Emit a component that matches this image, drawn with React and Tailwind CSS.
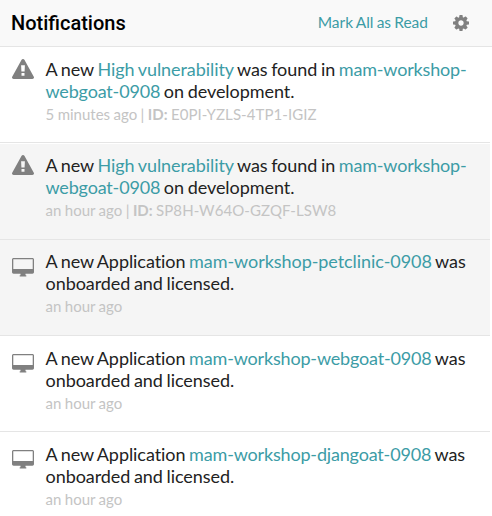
function WarningIcon() {
  return (
    <svg viewBox="0 0 22 20" className="h-5 w-[22px]" fill="#808080" fillRule="evenodd">
      <path d="M11 0c.6 0 1.100.3 1.400.8l9.400 16.900c.6 1-.2 2.300-1.400 2.300H1.600C.4 20-.4 18.700.2 17.700L9.600.8C9.900.3 10.400 0 11 0zM9.100 6.200l.3 6.200h3.200l.3-6.200zM9.500 14v2.800h3V14z" />
    </svg>
  );
}

function DesktopIcon() {
  return (
    <svg viewBox="0 0 22 19" className="h-[19px] w-[22px]" fill="#808080" fillRule="evenodd">
      <path d="M1.600 0h18.800C21.300 0 22 .7 22 1.600v12.500c0 .9-.7 1.600-1.600 1.600H13.500v1.500h.8v1.200H7.700v-1.200h.8v-1.500H1.600C.7 15.700 0 15 0 14.100V1.600C0 .7.7 0 1.600 0zM1.300 1.300v9.800h19.400V1.300z" />
    </svg>
  );
}

function GearIcon() {
  return (
    <svg viewBox="0 0 1536 1536" className="size-4" fill="#808080">
      <path d="M1024 768q0-106-75-181t-181-75-181 75-75 181 75 181 181 75 181-75 75-181zm512-109v222q0 12-8 23t-20 13l-185 28q-19 54-39 91 35 50 107 138 10 12 10 25t-9 23q-27 37-99 108t-94 71q-12 0-26-9l-138-108q-44 23-91 38-16 136-29 186-7 28-36 28H657q-14 0-24.500-8.500T621 1506l-28-184q-49-16-90-37l-141 107q-10 9-25 9-14 0-25-11-126-114-165-168-7-10-7-23 0-12 8-23 15-21 51-66.500t54-70.500q-27-50-41-99L29 913q-13-2-21-12.500T0 877V655q0-12 8-23t19-13l186-28q14-46 39-92-40-57-107-138-10-12-10-24 0-10 9-23 26-36 98.500-107.500T337 135q13 0 26 10l138 107q44-23 91-38 16-136 29-186 7-28 36-28h222q14 0 24.500 8.500T915 30l28 184q49 16 90 37l142-107q9-9 24-9 13 0 25 10 129 119 165 170 7 8 7 22 0 12-8 23-15 21-51 66.500t-54 70.500q26 50 41 98l183 28q13 2 21 12.500t8 23.500z" />
    </svg>
  );
}

const tight = "tracking-[-0.17px]";

const notifications = [
  { type: "risk", app: "mam-workshop-webgoat-0908", time: "5 minutes ago", id: "E0PI-YZLS-4TP1-IGIZ", bg: "bg-white", tracking: tight },
  { type: "risk", app: "mam-workshop-webgoat-0908", time: "an hour ago", id: "SP8H-W64O-GZQF-LSW8", bg: "bg-[#f5f5f5] shadow-[inset_0_1px_0_#fff]", tracking: tight },
  { type: "app", app: "mam-workshop-petclinic-0908", time: "an hour ago", bg: "bg-[#f5f5f5]", tracking: "" },
  { type: "app", app: "mam-workshop-webgoat-0908", time: "an hour ago", bg: "bg-white", tracking: tight },
  { type: "app", app: "mam-workshop-djangoat-0908", time: "an hour ago", bg: "bg-white", tracking: tight },
];

function Notification({ item }) {
  const link = "text-[#3c9ca6]";
  return (
    <li className={`flex h-[96.3px] border-b border-[#e5e5e5] pl-3 last:border-b-0 ${item.bg}`}>
      <div className={item.type === "risk" ? "w-[33.5px] shrink-0 pt-3" : "w-[33.5px] shrink-0 pt-[18px]"}>
        {item.type === "risk" ? <WarningIcon /> : <DesktopIcon />}
      </div>
      <div className="w-[430px] pt-[10.8px]">
        <p className="text-[18px] leading-[22px] tracking-[-0.06px] text-[#222] [word-spacing:-0.9px]">
          {item.type === "risk" ? (
            <>A new <a className={link}>High vulnerability</a> was found in <a className={`${link} ${item.tracking}`}>{item.app}</a> on development.</>
          ) : (
            <>A new Application <a className={`${link} ${item.tracking}`}>{item.app}</a> was onboarded and licensed.</>
          )}
        </p>
        <p className="mt-px text-[15px] leading-[23px] text-[#c4c4c4] [word-spacing:-0.4px]">
          {item.time}
          {item.id && <> | <b className="font-bold">ID:</b> <span className="tracking-[0.08px]">{item.id}</span></>}
        </p>
      </div>
    </li>
  );
}

export default function App() {
  return (
    <div className="h-[516px] w-[492px] overflow-hidden bg-white font-[Lato,sans-serif]">
      <header className="flex h-[47px] items-center border-b border-[#e5e5e5] bg-[#f9f9f9] pr-[23px] pb-px pl-[11px]">
        <h1 className="font-[Roboto,sans-serif] text-[20px] leading-6 font-medium text-black">Notifications</h1>
        <a className="mr-[25px] ml-auto text-[15.500px] text-[#3c9ca6] [word-spacing:-0.8px]">Mark All as Read</a>
        <GearIcon />
      </header>
      <ul className="w-[490px]">
        {notifications.map((item, i) => <Notification key={i} item={item} />)}
      </ul>
    </div>
  );
}
